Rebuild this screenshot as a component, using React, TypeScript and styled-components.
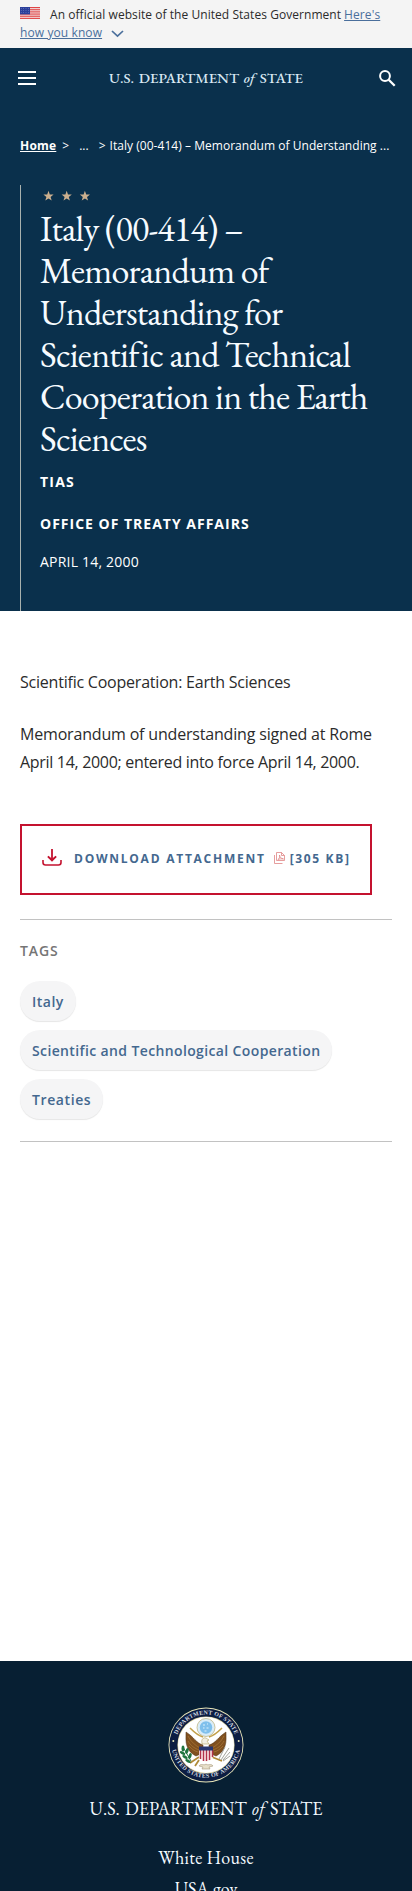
import React from "react";
import styled, { createGlobalStyle } from "styled-components";

const sans = `"Open Sans", "Noto Sans", sans-serif`;
const serif = `"EB Garamond", "Liberation Serif", serif`;

const GlobalStyle = createGlobalStyle`
  *, *::before, *::after { box-sizing: border-box; }
  body { margin: 0; background: #fff; font-family: ${sans}; color: #2b2b2b; }
  a { color: inherit; }
`;

const Page = styled.div`
  display: flex;
  flex-direction: column;
  height: 1891px;
  overflow: hidden;
`;

const Banner = styled.section`
  height: 48px;
  padding: 6px 20px 0;
  background: #f4f4f4;
  font-size: 12px;
  line-height: 18px;
  white-space: nowrap;
`;
const BannerRow = styled.div`
  display: flex;
  align-items: center;
  height: 18px;
`;
const BannerText = styled.span`
  letter-spacing: 0.05px;
`;
const BannerLink = styled.a<{ $left?: number }>`
  margin-left: ${(p) => p.$left ?? 0}px;
  color: #4a6f9c;
  letter-spacing: 0.1px;
`;
const FlagIcon = styled.svg`
  flex: none;
  margin: 0 10px 4px 0;
`;
const Chevron = styled.svg`
  margin: 2px 0 0 9px;
`;

const Hero = styled.div`
  display: flex;
  flex: none;
  flex-direction: column;
  height: 563px;
  background: #0a304c;
  color: #fff;
`;
const TopBar = styled.header`
  display: flex;
  align-items: center;
  justify-content: space-between;
  height: 60px;
  padding: 0 16px 0 18px;
`;
const Wordmark = styled.span<{ $size: number; $color: string; $weight?: number; $right?: number }>`
  margin-right: ${(p) => p.$right ?? 0}px;
  font-family: ${serif};
  font-size: ${(p) => p.$size}px;
  font-weight: ${(p) => p.$weight ?? 400};
  word-spacing: 1.7px;
  line-height: 24px;
  white-space: nowrap;
  color: ${(p) => p.$color};
`;
const Crumbs = styled.nav`
  display: flex;
  align-items: center;
  height: 18px;
  margin: 28px 20px 0;
  font-size: 12px;
  white-space: nowrap;
`;
const HomeLink = styled.a`
  font-weight: 700;
  letter-spacing: 0.2px;
`;
const Crumb = styled.span<{ $left: number; $spacing?: number }>`
  margin-left: ${(p) => p.$left}px;
  letter-spacing: ${(p) => p.$spacing ?? 0}px;
`;
const Intro = styled.div`
  flex: 1;
  margin: 31px 20px 0;
  padding: 1px 0 0 19px;
  border-left: 1px solid #a9b1ae;
`;
const Stars = styled.svg`
  display: block;
  margin: 4px 0 0 3px;
`;
const Title = styled.h1`
  margin: 6px 0 0;
  font-family: ${serif};
  font-size: 36px;
  font-weight: 400;
  line-height: 42px;
  letter-spacing: -0.78px;
  color: #f6fbff;
`;
const Meta = styled.p<{ $top: number; $bold?: boolean; $spacing: number }>`
  margin: ${(p) => p.$top}px 0 0;
  font-size: 14px;
  line-height: 20px;
  font-weight: ${(p) => (p.$bold ? 700 : 400)};
  letter-spacing: ${(p) => p.$spacing}px;
`;

const Content = styled.main`
  flex: 1;
  padding: 57px 20px 0;
`;
const Paragraph = styled.p`
  margin: 0 0 24px;
  font-size: 16px;
  line-height: 28px;
  white-space: nowrap;
`;
const Line = styled.span<{ $spacing: number }>`
  display: block;
  letter-spacing: ${(p) => p.$spacing}px;
`;
const Download = styled.a`
  display: flex;
  align-items: center;
  width: 352px;
  height: 71px;
  margin-top: 48px;
  padding: 0 0 3px 20px;
  border: 2px solid #c4122f;
  font-size: 12px;
  font-weight: 700;
  letter-spacing: 1.75px;
  white-space: nowrap;
  text-decoration: none;
  color: #44688f;
`;
const DownloadLabel = styled.span`
  margin: 0 8px 0 12px;
`;
const SizeLabel = styled.span`
  margin-left: 5px;
  letter-spacing: 1.65px;
`;
const Tags = styled.section`
  height: 223px;
  margin-top: 24px;
  padding-top: 21px;
  border: solid #c2c2c2;
  border-width: 1px 0;
`;
const TagsHeading = styled.h2`
  margin: 0 0 20px;
  font-size: 14px;
  line-height: 20px;
  font-weight: 600;
  letter-spacing: 0.9px;
  color: #757575;
`;
const TagList = styled.div`
  display: flex;
  flex-direction: column;
  align-items: flex-start;
  gap: 9px;
`;
const Tag = styled.a<{ $spacing: number }>`
  height: 40px;
  padding: 0 12px;
  border-radius: 20px;
  background: #f5f5f6;
  box-shadow: 0 1px 1px #e6e6e6;
  font-size: 14px;
  line-height: 41px;
  font-weight: 600;
  letter-spacing: ${(p) => p.$spacing}px;
  text-decoration: none;
  color: #44688f;
`;

const Footer = styled.footer`
  display: flex;
  flex: none;
  flex-direction: column;
  align-items: center;
  height: 230px;
  padding-top: 46px;
  overflow: hidden;
  background: #071f33;
  color: #f4faff;
`;
const SealIcon = styled.svg`
  flex: none;
`;
const FooterMark = styled.div`
  flex: none;
  margin-top: 14px;
`;
const FooterLinks = styled.div`
  display: flex;
  flex: none;
  flex-direction: column;
  align-items: center;
  margin-top: 21px;
`;
const FooterLink = styled.a<{ $spacing: number }>`
  font-family: ${serif};
  font-size: 18px;
  line-height: 31px;
  letter-spacing: ${(p) => p.$spacing}px;
  text-decoration: none;
`;

const Flag = () => (
  <FlagIcon width="20" height="12" viewBox="0 0 20 12">
    <rect width="20" height="12" fill="#f3e9ea" />
    {[0, 1, 2, 3, 4, 5, 6].map((i) => (
      <rect key={i} y={i * 1.85} width="20" height="0.95" fill="#df3d3d" />
    ))}
    <rect width="10" height="7.4" fill="#2b3f9a" />
    {[1.2, 3.2, 5.2].map((y) =>
      [1.2, 3.6, 6, 8.4].map((x) => <circle key={`${x}-${y}`} cx={x} cy={y + 0.4} r="0.4" fill="#aab6e6" />)
    )}
  </FlagIcon>
);

const starPoints = "0,-5.4 1.3,-1.7 5.1,-1.6 2.1,0.7 3.2,4.4 0,2.2 -3.2,4.4 -2.1,0.7 -5.1,-1.6 -1.3,-1.7";

const Seal = () => (
  <SealIcon width="76" height="76" viewBox="0 0 76 76">
    <defs>
      <path id="sealTop" d="M7.500 38a30.500 30.500 0 0 1 61 0" />
      <path id="sealBottom" d="M3.300 36a34.700 34.700 0 0 0 69.400 0" />
    </defs>
    <circle cx="38" cy="38" r="37.5" fill="#e9e6b9" />
    <circle cx="38" cy="38" r="36.6" fill="#0c1d42" />
    <circle cx="38" cy="38" r="28.6" fill="#d8cf9a" />
    <circle cx="38" cy="38" r="28" fill="#fff" />
    <g fill="#d5dbe0" fontFamily="Liberation Serif, serif" fontSize="6" fontWeight="700">
      <text letterSpacing="0.15">
        <textPath href="#sealTop" startOffset="50%" textAnchor="middle">DEPARTMENT OF STATE</textPath>
      </text>
      <text letterSpacing="0.3">
        <textPath href="#sealBottom" startOffset="50%" textAnchor="middle">UNITED STATES OF AMERICA</textPath>
      </text>
    </g>
    <circle cx="5.3" cy="34" r="1" fill="#e9e6b9" />
    <circle cx="70.7" cy="34" r="1" fill="#e9e6b9" />
    <circle cx="38" cy="20.5" r="9" fill="#d9ecf8" stroke="#b9ad76" strokeWidth="0.7" />
    <circle cx="38" cy="20.5" r="6.2" fill="#7fc0ec" />
    <path d="M35 18h2m2-1h1m-5 4h1.500m2 0h2m-4 3h2" stroke="#e8f6ff" strokeWidth="0.9" />
    <g fill="#80501f" stroke="#4d3014" strokeWidth="0.5">
      <path d="M35 38C28 36 26 30 18 25c0 5-.5 10 1 14 1.500 5 5 8 9 10l7-3z" />
      <path d="M41 38c7-2 9-8 17-13 0 5 .5 10-1 14-1.500 5-5 8-9 10l-7-3z" />
    </g>
    <g stroke="#b1823e" strokeWidth="0.6" fill="none">
      <path d="M20 29c3 6 7 9 12 12M20 34c3 5 6 7 11 9M21 39c3 3 5 5 9 6M56 29c-3 6-7 9-12 12M56 34c-3 5-6 7-11 9M55 39c-3 3-5 5-9 6" />
      <path d="M22 21c6 6 9 8 13 9M54 21c-6 6-9 8-13 9" stroke="#c2a04a" strokeWidth="1.600" />
    </g>
    <path d="M34 36c-1-3 1-6 4-5l3 2-2 1 2 3h-7z" fill="#f2efe2" stroke="#a79247" strokeWidth="0.5" />
    <path d="M31 50l-9 6m9-3l-4 6m17-9l10 4" stroke="#b08b38" strokeWidth="1.800" />
    <path d="M31 40h14v9c0 3-3 5-7 6-4-1-7-3-7-6z" fill="#fff4f1" />
    <path d="M32.500 43v9m3-9v11m3-11v11m3-11v10m3-10v7" stroke="#b2334b" strokeWidth="1.5" />
    <path d="M31 39.500h14v4H31z" fill="#28366f" />
    <path d="M15 40l8 14" stroke="#287543" strokeWidth="1" />
    <g fill="#1f743e">
      <ellipse cx="15" cy="41.500" rx="1.500" ry="3" />
      <ellipse cx="14.500" cy="46" rx="1.500" ry="3" transform="rotate(-60 14.500 46)" />
      <ellipse cx="19" cy="44" rx="1.500" ry="3" transform="rotate(20 19 44)" />
      <ellipse cx="17" cy="50" rx="1.500" ry="3" transform="rotate(-60 17 50)" />
      <ellipse cx="22" cy="49" rx="1.500" ry="3" transform="rotate(20 22 49)" />
      <ellipse cx="20" cy="54" rx="1.500" ry="3" transform="rotate(-60 20 54)" />
    </g>
    <path d="M53 53l8-12m-6 12l7-8m-11 7l6-12m-2 14l7-5" stroke="#a2a39b" strokeWidth="1" fill="none" />
    <path d="M31 59c2-3 5 0 7-2 2 2 5-1 7 2l-4 1 1 2h-8l1-2z" fill="#e7dfc8" stroke="#a6977a" strokeWidth="0.6" />
  </SealIcon>
);

const Department = () => (
  <>
    U.S. DEPARTMENT <em>of</em> STATE
  </>
);

export default function App() {
  return (
    <Page>
      <GlobalStyle />
      <Banner>
        <BannerRow>
          <Flag />
          <BannerText>An official website of the United States Government</BannerText>
          <BannerLink href="#" $left={3}>Here's</BannerLink>
        </BannerRow>
        <BannerRow>
          <BannerLink href="#">how you know</BannerLink>
          <Chevron width="13" height="8" viewBox="0 0 13 8">
            <path d="M1 1l5.500 5.200L12 1" fill="none" stroke="#4a6f9c" strokeWidth="1.700" />
          </Chevron>
        </BannerRow>
      </Banner>

      <Hero>
        <TopBar>
          <svg width="18" height="14" viewBox="0 0 18 14">
            <path d="M0 1h18M0 7h18M0 13h18" stroke="#fff" strokeWidth="2" />
          </svg>
          <Wordmark $size={14.8} $weight={500} $right={3} $color="#d9e8f3"><Department /></Wordmark>
          <svg width="17" height="17" viewBox="0 0 17 17" fill="none" stroke="#fff">
            <circle cx="6" cy="6" r="4.900" strokeWidth="2" />
            <path d="M9.700 9.700l6 6" strokeWidth="2.300" />
          </svg>
        </TopBar>
        <Crumbs>
          <HomeLink href="#">Home</HomeLink>
          <Crumb $left={6}>&gt;</Crumb>
          <Crumb $left={10}>...</Crumb>
          <Crumb $left={10}>&gt;</Crumb>
          <Crumb $left={4} $spacing={0.04}>Italy (00-414) – Memorandum of Understanding ...</Crumb>
        </Crumbs>
        <Intro>
          <Stars width="48" height="12" viewBox="0 0 48 12" fill="#cbaf8e">
            {[5.5, 23.7, 41.9].map((x) => (
              <polygon key={x} points={starPoints} transform={`translate(${x} 6.200)`} />
            ))}
          </Stars>
          <Title>Italy (00-414) – Memorandum of Understanding for Scientific and Technical Cooperation in the Earth Sciences</Title>
          <Meta $top={12} $bold $spacing={1.2}>TIAS</Meta>
          <Meta $top={22} $bold $spacing={1}>OFFICE OF TREATY AFFAIRS</Meta>
          <Meta $top={18} $spacing={0.2}>APRIL 14, 2000</Meta>
        </Intro>
      </Hero>

      <Content>
        <Paragraph>
          <Line $spacing={-0.22}>Scientific Cooperation: Earth Sciences</Line>
        </Paragraph>
        <Paragraph>
          <Line $spacing={-0.18}>Memorandum of understanding signed at Rome</Line>
          <Line $spacing={-0.31}>April 14, 2000; entered into force April 14, 2000.</Line>
        </Paragraph>
        <Download href="#">
          <svg width="20" height="18" viewBox="0 0 20 18" fill="none" stroke="#c4122f" strokeWidth="1.800">
            <path d="M10 0v11" />
            <path d="M10 12.800L5.200 8l1.300-1.200L10 9.700l3.500-2.900L14.800 8z" fill="#c4122f" stroke="none" />
            <path d="M1 11v2.500q0 2.500 2.500 2.500h13q2.500 0 2.500-2.500V11" strokeWidth="1.600" />
          </svg>
          <DownloadLabel>DOWNLOAD ATTACHMENT</DownloadLabel>
          <svg width="11" height="12" viewBox="0 0 11 12" fill="none" stroke="#df8585" strokeWidth="0.800">
            <path d="M2.500.5h5l3 3v5h-8zM7.500.5v3h3M.5 3v8.500h8M4 7.500c2-2 2-3 1.500-4.500 0 2 1 3 4 4-2-.500-4 0-5.500.500z" />
          </svg>
          <SizeLabel>[305 KB]</SizeLabel>
        </Download>
        <Tags>
          <TagsHeading>TAGS</TagsHeading>
          <TagList>
            <Tag href="#" $spacing={0.5}>Italy</Tag>
            <Tag href="#" $spacing={0.37}>Scientific and Technological Cooperation</Tag>
            <Tag href="#" $spacing={0.6}>Treaties</Tag>
          </TagList>
        </Tags>
      </Content>

      <Footer>
        <Seal />
        <FooterMark>
          <Wordmark $size={18.2} $color="#f4faff"><Department /></Wordmark>
        </FooterMark>
        <FooterLinks>
          <FooterLink href="#" $spacing={0.3}>White House</FooterLink>
          <FooterLink href="#" $spacing={0}>USA.gov</FooterLink>
        </FooterLinks>
      </Footer>
    </Page>
  );
}
